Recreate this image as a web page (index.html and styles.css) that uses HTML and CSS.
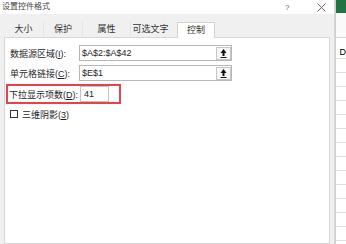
FILE: index.html
```html
<!DOCTYPE html>
<html lang="zh-CN">
<head>
    <meta charset="UTF-8">
    <meta name="viewport" content="width=device-width, initial-scale=1.0">
    <title>设置控件格式</title>
    <link rel="stylesheet" href="styles.css">
</head>
<body>
    <div class="screen">
        <div class="dialog">
            <div class="titlebar">
                <span class="title">设置控件格式</span>
                <span class="help">?</span>
                <span class="close">
                    <svg width="9" height="9" viewBox="0 0 9 9">
                        <path d="M0.5 0.5 L8.5 8.5 M8.5 0.5 L0.5 8.5" stroke="#555" stroke-width="0.9" fill="none"/>
                    </svg>
                </span>
            </div>
            <div class="dialog-body">
                <div class="tabs">
                    <div class="tab tab-size">大小</div>
                    <div class="tab tab-protect">保护</div>
                    <div class="tab tab-props">属性</div>
                    <div class="tab tab-alt">可选文字</div>
                    <div class="tab active">控制</div>
                </div>
                <div class="panel">
                    <div class="field">
                        <label>数据源区域(<u>I</u>):</label>
                        <div class="ref-input">
                            <span class="value">$A$2:$A$42</span>
                            <span class="collapse">
                                <svg width="13" height="11" viewBox="0 0 13 11">
                                    <path d="M6.5 1 L9.5 5 H7.5 V8 H5.5 V5 H3.5 Z" fill="#111"/>
                                    <rect x="3.5" y="9" width="6" height="1" fill="#111"/>
                                </svg>
                            </span>
                        </div>
                    </div>
                    <div class="field">
                        <label>单元格链接(<u>C</u>):</label>
                        <div class="ref-input">
                            <span class="value">$E$1</span>
                            <span class="collapse">
                                <svg width="13" height="11" viewBox="0 0 13 11">
                                    <path d="M6.5 1 L9.5 5 H7.5 V8 H5.5 V5 H3.5 Z" fill="#111"/>
                                    <rect x="3.5" y="9" width="6" height="1" fill="#111"/>
                                </svg>
                            </span>
                        </div>
                    </div>
                    <div class="highlight">
                        <label>下拉显示项数(<u>D</u>):</label>
                        <div class="num-input">41</div>
                    </div>
                    <div class="check-row">
                        <span class="checkbox"></span>
                        <span>三维阴影(<u>3</u>)</span>
                    </div>
                </div>
            </div>
        </div>
        <div class="sheet">
            <div class="sheet-top"></div>
            <div class="sheet-head"></div>
            <div class="sheet-cells">
                <span class="cell-text">D</span>
            </div>
        </div>
    </div>
</body>
</html>
```
FILE: styles.css
```css
* {
    margin: 0;
    padding: 0;
    box-sizing: border-box;
}
body {
    font-family: 'Liberation Sans', 'Noto Sans CJK SC', sans-serif;
    font-size: 9px;
    color: #1e1e1e;
    background: #fff;
    width: 346px;
    height: 244px;
    overflow: hidden;
}
.screen {
    display: flex;
    width: 346px;
    height: 244px;
}
.dialog {
    width: 337px;
    display: flex;
    flex-direction: column;
    background: #f0f0f0;
    border-right: 1px solid #d6d6d6;
}
.titlebar {
    height: 14px;
    background: #fff;
    display: flex;
    align-items: center;
    padding-left: 2px;
}
.title {
    font-size: 8px;
    color: #444;
    flex: 1;
    line-height: 12px;
}
.help {
    font-size: 8px;
    color: #666;
    margin-right: 27px;
}
.close {
    display: flex;
    margin-right: 8px;
}
.dialog-body {
    flex: 1;
    display: flex;
    flex-direction: column;
    padding: 0 4px;
}
.tabs {
    height: 24px;
    display: flex;
    align-items: flex-end;
    margin-bottom: -1px;
}
.tab {
    height: 16px;
    line-height: 15px;
    text-align: center;
    color: #333;
    border-right: 1px solid #e4e4e4;
}
.tab-size {
    width: 40px;
}
.tab-protect {
    width: 39px;
}
.tab-props {
    width: 48px;
}
.tab-alt {
    width: 39px;
    border-right: none;
}
.tab.active {
    width: 38px;
    margin-left: 7px;
    background: #fff;
    border: 1px solid #d2d2d2;
    border-bottom: none;
    position: relative;
    z-index: 1;
}
.panel {
    flex: 1;
    background: #fff;
    border: 1px solid #d6d6d6;
    padding-top: 7px;
    display: flex;
    flex-direction: column;
}
.field {
    display: flex;
    align-items: center;
    height: 16px;
    padding-left: 5px;
    margin-bottom: 4px;
}
.field label {
    width: 69px;
}
.ref-input {
    width: 153px;
    height: 16px;
    border: 1px solid #b7b7b7;
    display: flex;
    align-items: center;
}
.value {
    flex: 1;
    padding-left: 2px;
    line-height: 14px;
}
.collapse {
    width: 15px;
    height: 13px;
    margin-right: 0;
    border: 1px solid #c6c6c6;
    background: #f7f7f7;
    display: flex;
    align-items: center;
    justify-content: center;
}
.highlight {
    width: 115px;
    height: 20px;
    margin: -1px 0 0 1px;
    border: 2px solid #e4434c;
    display: flex;
    align-items: center;
    padding-left: 1px;
}
.highlight label {
    width: 71px;
}
.num-input {
    width: 29px;
    height: 16px;
    border: 1px solid #c4c4c4;
    padding-left: 3px;
    line-height: 14px;
}
.check-row {
    display: flex;
    align-items: center;
    gap: 4px;
    padding-left: 5px;
    margin-top: 6px;
    height: 8px;
}
.checkbox {
    width: 8px;
    height: 8px;
    border: 1px solid #333;
}
.sheet {
    flex: 1;
    display: flex;
    flex-direction: column;
    border-left: 1px solid #d0d0d0;
}
.sheet-top {
    height: 13px;
    background: #217346;
}
.sheet-head {
    height: 25px;
    background: #fafafa;
    border-bottom: 1px solid #d4d4d4;
}
.sheet-cells {
    flex: 1;
    background: repeating-linear-gradient(to bottom, transparent 0, transparent 13px, #e1e1e1 13px, #e1e1e1 14px);
    background-position: 0 7px;
}
.cell-text {
    display: block;
    margin-top: 9px;
    padding-left: 4px;
    font-size: 9px;
    line-height: 11px;
    color: #000;
}
```
